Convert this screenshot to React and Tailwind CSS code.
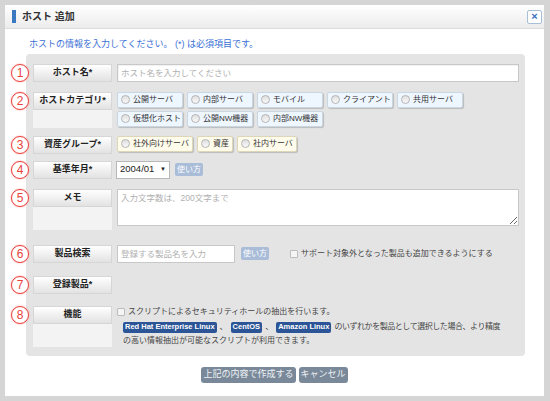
import React from 'react';

const CATEGORY_OPTIONS = [
  ['公開サーバ', '内部サーバ', 'モバイル', 'クライアント', '共用サーバ'],
  ['仮想化ホスト', '公開NW機器', '内部NW機器']
];

const ASSET_OPTIONS = ['社外向けサーバ', '資産', '社内サーバ'];

function Num({ n }) {
  return (
    <div className="-ml-[16px] mr-[3px] flex h-[18px] w-[20px] shrink-0 items-center justify-center">
      <span className="flex h-[18px] w-[18px] items-center justify-center rounded-full border-[1.5px] border-[#e8413b] bg-white text-[12px] leading-none text-[#e8413b] shadow-[0_0_2px_rgba(255,120,120,0.7)]">
        {n}
      </span>
    </div>
  );
}

function Label({ text, lower }) {
  return (
    <div className="flex w-[79px] shrink-0 flex-col">
      <div className="flex h-[18px] items-center justify-center border border-[#d6d6d6] bg-linear-to-b from-white to-[#e2e2e2] text-[9px] font-bold text-[#222]">
        {text}
      </div>
      {lower && <div className="bg-[#f3f3f3]" style={{ height: lower }} />}
    </div>
  );
}

function Radio({ label, tone, fixed }) {
  const toneClass =
    tone === 'blue'
      ? 'border-[#c9d6e4] bg-[#eef6ff]'
      : 'border-[#ddd6b8] bg-[#fffcec]';
  return (
    <div
      className={`flex h-[16px] items-center gap-[3px] rounded-[2px] border px-[3px] text-[8px] text-[#333] shadow-[1px_1px_1px_rgba(0,0,0,0.18)] ${toneClass} ${fixed ? 'w-[66px]' : ''}`}
    >
      <span className="h-[9px] w-[9px] shrink-0 rounded-full border border-[#b4b4b4] bg-linear-to-b from-[#e0e0e0] to-[#f8f8f8]" />
      <span className="whitespace-nowrap">{label}</span>
    </div>
  );
}

function HowTo() {
  return (
    <span className="inline-flex h-[13px] items-center rounded-[2px] bg-[#a9bcd8] px-[2px] text-[8px] text-white">
      使い方
    </span>
  );
}

function Checkbox() {
  return <span className="h-[8px] w-[8px] shrink-0 rounded-[1px] border border-[#bcbcbc] bg-[#f5f5f5]" />;
}

function Badge({ children }) {
  return (
    <span className="flex h-[11px] items-center rounded-[2px] bg-[#2b5596] px-[2px] font-['Liberation_Sans',sans-serif] text-[7.5px] font-bold text-white">
      {children}
    </span>
  );
}

export default function App() {
  return (
    <div className="h-[401px] w-[550px] overflow-hidden bg-[#d5d5d5] pl-[5px] pt-[5px] font-['Liberation_Sans','Noto_Sans_CJK_JP',sans-serif]">
      <div className="h-[391px] w-[539px] bg-white">
        {/* header */}
        <div className="flex h-[24px] items-center border-b border-[#dcdcdc] bg-linear-to-b from-white to-[#ececec] pl-[7px] pr-[2px]">
          <span className="h-[13px] w-[4px] bg-[#3b78c2]" />
          <span className="ml-[6px] text-[10px] font-bold text-[#333]">ホスト 追加</span>
          <span className="ml-auto flex h-[14px] w-[15px] items-center justify-center rounded-[2px] border border-[#a8bfd8] bg-white text-[11px] font-bold leading-none text-[#3b6fc4]">
            ×
          </span>
        </div>

        <div className="pl-[24px] pt-[9px] text-[9px] text-[#3a6fd6]">
          ホストの情報を入力してください。 (*) は必須項目です。
        </div>

        {/* form panel */}
        <div className="ml-[21px] mt-[2px] w-[499px] rounded-[4px] bg-[#e4e4e4] pb-[9px] pr-[6px] pt-[10px]">
          <div className="flex items-start">
            <Num n="1" />
            <Label text="ホスト名*" />
            <input
              placeholder="ホスト名を入力してください"
              className="ml-[5px] h-[18px] flex-1 border border-[#c8c8c8] bg-white px-[3px] text-[8.5px] shadow-[inset_1px_1px_1px_rgba(0,0,0,0.06)] outline-none placeholder:text-[#b0b0b0]"
            />
          </div>

          <div className="mt-[10px] flex items-start">
            <Num n="2" />
            <Label text="ホストカテゴリ*" lower={18} />
            <div className="ml-[5px] flex flex-col gap-[3px]">
              {CATEGORY_OPTIONS.map((row, i) => (
                <div key={i} className="flex gap-[4px]">
                  {row.map(label => (
                    <Radio key={label} label={label} tone="blue" fixed />
                  ))}
                </div>
              ))}
            </div>
          </div>

          <div className="mt-[8px] flex items-start">
            <Num n="3" />
            <Label text="資産グループ*" />
            <div className="ml-[5px] flex gap-[4px]">
              {ASSET_OPTIONS.map(label => (
                <Radio key={label} label={label} tone="yellow" />
              ))}
            </div>
          </div>

          <div className="mt-[7px] flex items-start">
            <Num n="4" />
            <Label text="基準年月*" />
            <div className="ml-[4px] flex h-[18px] w-[54px] items-center justify-between border border-[#b8b8b8] bg-white px-[3px] text-[9.5px] text-[#222]">
              <span>2004/01</span>
              <span className="text-[6px]">▼</span>
            </div>
            <div className="ml-[5px] flex h-[18px] items-center">
              <HowTo />
            </div>
          </div>

          <div className="mt-[10px] flex items-start">
            <Num n="5" />
            <Label text="メモ" lower={23} />
            <textarea
              placeholder="入力文字数は、200文字まで"
              className="ml-[5px] h-[37px] flex-1 border border-[#c8c8c8] bg-white px-[3px] py-[2px] text-[8.5px] outline-none placeholder:text-[#b0b0b0]"
            />
          </div>

          <div className="mt-[15px] flex items-start">
            <Num n="6" />
            <Label text="製品検索" />
            <input
              placeholder="登録する製品名を入力"
              className="ml-[5px] h-[18px] w-[118px] border border-[#c8c8c8] bg-white px-[3px] text-[8.5px] outline-none placeholder:text-[#b0b0b0]"
            />
            <div className="ml-[6px] flex h-[18px] items-center">
              <HowTo />
            </div>
            <div className="ml-[21px] flex h-[18px] items-center gap-[3px] text-[8px] text-[#444]">
              <Checkbox />
              <span>サポート対象外となった製品も追加できるようにする</span>
            </div>
          </div>

          <div className="mt-[13px] flex items-start">
            <Num n="7" />
            <Label text="登録製品*" />
          </div>

          <div className="mt-[12px] flex items-start">
            <Num n="8" />
            <Label text="機能" lower={23} />
            <div className="ml-[5px] flex-1 text-[8px] text-[#444]">
              <div className="flex h-[13px] items-center gap-[3px]">
                <Checkbox />
                <span>スクリプトによるセキュリティホールの抽出を行います。</span>
              </div>
              <div className="mt-[2px] flex h-[13px] items-center gap-[3px] whitespace-nowrap pl-[6px]">
                <Badge>Red Hat Enterprise Linux</Badge>
                <span>、</span>
                <Badge>CentOS</Badge>
                <span>、</span>
                <Badge>Amazon Linux</Badge>
                <span className="tracking-[-0.45px]">のいずれかを製品として選択した場合、より精度</span>
              </div>
              <div className="h-[13px] whitespace-nowrap pl-[6px] leading-[13px]">
                の高い情報抽出が可能なスクリプトが利用できます。
              </div>
            </div>
          </div>
        </div>

        {/* actions */}
        <div className="mt-[11px] flex justify-center gap-[3px]">
          <button className="h-[16px] rounded-[3px] bg-[#7a8999] px-[2px] text-[9px] leading-none text-[#eef2f6]">
            上記の内容で作成する
          </button>
          <button className="h-[16px] rounded-[3px] bg-[#7a8999] px-[2px] text-[9px] leading-none text-[#eef2f6]">
            キャンセル
          </button>
        </div>
      </div>
    </div>
  );
}
